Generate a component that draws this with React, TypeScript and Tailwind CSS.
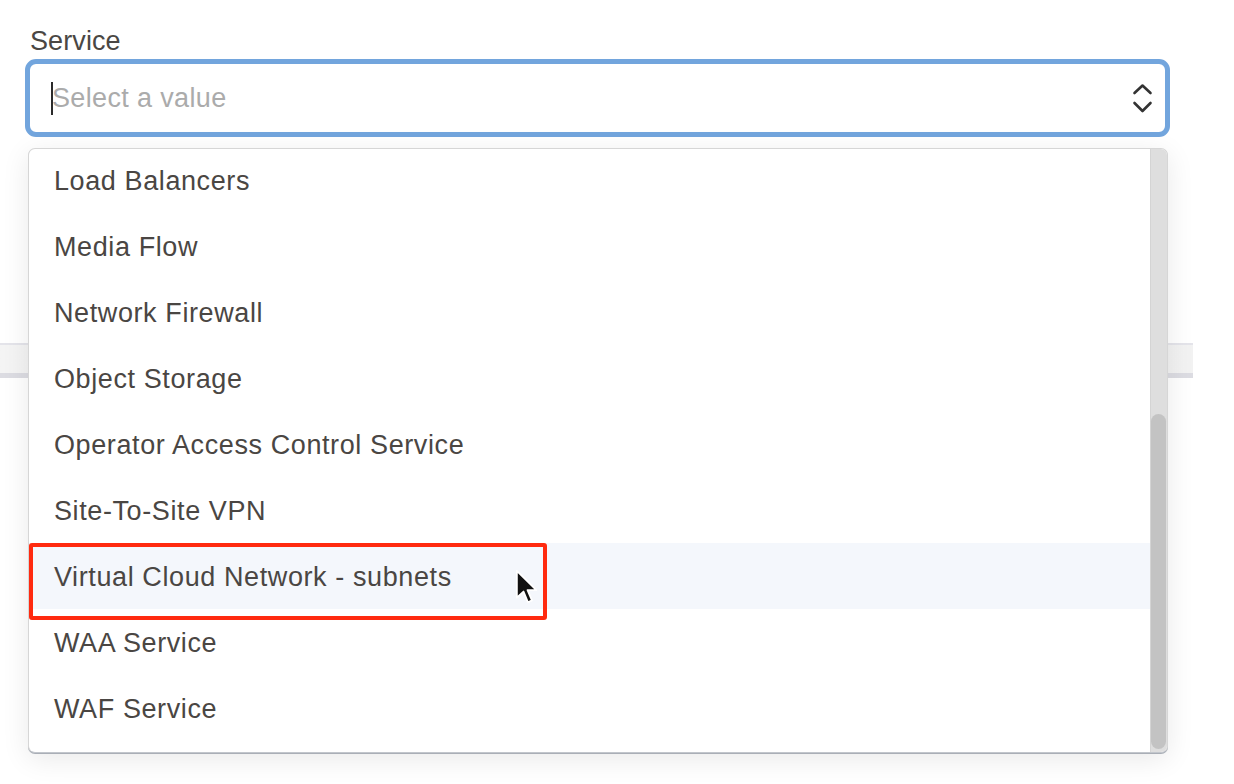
import React from 'react';

const options = [
  'Load Balancers',
  'Media Flow',
  'Network Firewall',
  'Object Storage',
  'Operator Access Control Service',
  'Site-To-Site VPN',
  'Virtual Cloud Network - subnets',
  'WAA Service',
  'WAF Service',
];

const HIGHLIGHT = 'Virtual Cloud Network - subnets';

const Chevrons = () => (
  <svg width="21" height="31" viewBox="0 0 21 31" fill="none">
    <polyline
      points="2.5,10 10.5,2.5 18.5,10"
      stroke="#333"
      strokeWidth="2.6"
      strokeLinecap="round"
      strokeLinejoin="round"
    />
    <polyline
      points="2.5,20 10.5,28 18.5,20"
      stroke="#333"
      strokeWidth="2.6"
      strokeLinecap="round"
      strokeLinejoin="round"
    />
  </svg>
);

const Pointer = () => (
  <svg width="24" height="37" viewBox="0 0 13 20">
    <path
      d="M1 1 L1 15.5 L4.6 12.2 L7 18 L9.2 17 L6.8 11.4 L11.6 11.4 Z"
      fill="#111"
      stroke="#fff"
      strokeWidth="1"
      strokeLinejoin="round"
    />
  </svg>
);

const App = () => {
  return (
    <div
      className="relative w-[1234px] h-[784px] bg-white overflow-hidden"
      style={{ fontFamily: '"Liberation Sans", Arial, sans-serif' }}
    >
      {/* Form field */}
      <div className="px-[25px] pt-[28px]">
        <label className="block ml-[5px] text-[27px] leading-[27px] text-[#4a4744] tracking-[0.1px]">
          Service
        </label>
        <div className="mt-[4px] w-[1145px] h-[78px] border-[5px] border-[#72a5dd] rounded-[11px] bg-white flex items-center justify-between pl-[21px] pr-[12px]">
          <div className="flex items-center pt-[1px]">
            <span className="w-[2px] h-[33px] bg-[#2b2b2b]" />
            <span className="text-[27px] text-[#ababab] -ml-[1px] tracking-[0.35px]">
              Select a value
            </span>
          </div>
          <Chevrons />
        </div>
      </div>

      {/* Content below, covered by the open menu */}
      <div className="mt-[206px] w-[1193px] h-[35px] border-t-2 border-[#e4e4ea] bg-gradient-to-r from-[#f4f4f4] via-[#f7f7f7] to-[#f2f2f2] border-b-[5px] border-b-[#dcdce2]" />

      {/* Dropdown menu */}
      <div className="absolute top-[148px] left-[28px] w-[1140px] h-[605px] bg-white border border-[#d6d6d6] border-b-[#c2c6cc] rounded-[7px] shadow-[0_1px_0_#a9aeb6,0_6px_28px_rgba(0,0,0,0.09)] overflow-hidden flex">
        <div className="flex-1 -mt-[2px]">
          {options.map((opt) => (
            <div
              key={opt}
              className={`h-[66px] flex items-center pl-[25px] pt-[2px] text-[27px] text-[#4a4643] tracking-[0.6px] ${
                opt === HIGHLIGHT ? 'bg-[#f4f7fc]' : ''
              }`}
            >
              {opt}
            </div>
          ))}
        </div>
        <div className="w-[17px] bg-[#dedede] border-l border-[#d4d4d4] flex flex-col justify-end pb-[3px]">
          <div className="h-[335px] w-[15px] bg-[#c3c3c3] rounded-full" />
        </div>
      </div>

      {/* Annotation box */}
      <div className="absolute top-[543px] left-[29px] w-[518px] h-[77px] border-4 border-[#ff2a0f] rounded-[3px]" />

      {/* Mouse pointer */}
      <div className="absolute top-[569px] left-[515px]">
        <Pointer />
      </div>
    </div>
  );
};

export default App;
